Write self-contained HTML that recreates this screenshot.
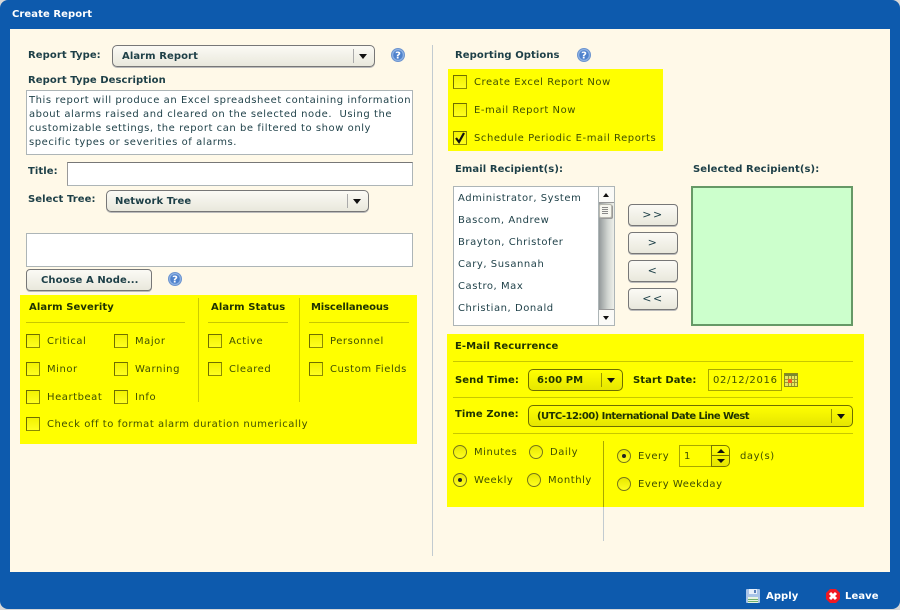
<!DOCTYPE html>
<html><head><meta charset="utf-8"><title>Create Report</title>
<style>
html,body{margin:0;padding:0;background:#e8e8e8}
#w{position:relative;width:900px;height:610px;overflow:hidden;background:#d8d8d8;font-family:"DejaVu Sans",sans-serif;font-size:10px;color:#1d3f47}
#f{position:absolute;left:0;top:0;width:900px;height:609px;background:#0d5aad;border-radius:8px}
#c{position:absolute;left:10px;top:29px;width:880px;height:543px;background:#fff9e8}
.a{position:absolute}
.t{position:absolute;height:14px;line-height:14px;margin-top:2px;white-space:nowrap;letter-spacing:.55px}
.b{font-weight:bold;letter-spacing:.08px}
.y{position:absolute;background:#ffff00}
.yt{color:#3f4f00}
.yb{color:#1f3300}
.sel{position:absolute;box-sizing:border-box;height:22px;border:1px solid #777;border-radius:5px;background:linear-gradient(#fbfaf5,#e9e8dc);box-shadow:0 1px 0 #bbb}
.sy{background:linear-gradient(#ffff00,#e6e600);border-color:#6e6e00;box-shadow:none}
.sp{position:absolute;top:3px;width:1px;height:14px;background:#aaa}
.sy .sp{background:#999900}
.ar{position:absolute;top:8px;width:0;height:0;border-left:4px solid transparent;border-right:4px solid transparent;border-top:5px solid #111}
.box{position:absolute;box-sizing:border-box;background:#fff;border:1px solid #adb5b7}
.cb{position:absolute;box-sizing:border-box;width:14px;height:14px;border:1px solid #6e6e00;border-right-color:#8c8c00;border-bottom-color:#8c8c00;background:linear-gradient(#f2f200,#ffff20)}
.ln{position:absolute;height:1px;background:#c8c800}
.vl{position:absolute;width:1px;background:#cccc00}
.btn{position:absolute;box-sizing:border-box;border:1px solid #777;border-radius:4px;background:linear-gradient(#fbfaf5,#e9e8dc);text-align:center;box-shadow:0 1px 0 #bbb}
.btn .g{left:0;width:48px;top:1px;font-size:11px;letter-spacing:1.5px}
.r{position:absolute;box-sizing:border-box;width:14px;height:14px;border:1px solid #77771a;border-radius:50%;background:linear-gradient(#e8e800,#ffff20)}
.r i{position:absolute;left:4px;top:4px;width:4px;height:4px;border-radius:50%;background:#222}
svg{position:absolute;overflow:visible}
</style></head><body>
<div id="w">
<div id="f"></div>
<div id="c"></div>
<div class="t b" style="left:12px;top:6px;color:#fff">Create Report</div>

<!-- Left column -->
<div class="t b" style="left:28px;top:47px">Report Type:</div>
<div class="sel" style="left:112px;top:45px;width:263px"><div class="t b" style="left:9px;top:2px">Alarm Report</div><div class="sp" style="left:240px"></div><div class="ar" style="left:246px"></div></div>
<svg style="left:391px;top:48px" width="14" height="14" viewBox="0 0 14 14"><circle cx="7" cy="7" r="6.5" fill="#8fb3e4" stroke="#6c94cf"/><circle cx="7" cy="7" r="4.8" fill="#4f82cc"/><text x="7" y="10.5" font-family="DejaVu Sans" font-size="10" font-weight="bold" fill="#fff" text-anchor="middle">?</text></svg>
<div class="t b" style="left:28px;top:72px">Report Type Description</div>
<div class="box" style="left:26px;top:90px;width:387px;height:65px"></div>
<div class="t" style="left:29px;top:92px">This report will produce an Excel spreadsheet containing information</div>
<div class="t" style="left:29px;top:106px">about alarms raised and cleared on the selected node.&nbsp; Using the</div>
<div class="t" style="left:29px;top:120px">customizable settings, the report can be filtered to show only</div>
<div class="t" style="left:29px;top:134px">specific types or severities of alarms.</div>
<div class="t b" style="left:28px;top:163px">Title:</div>
<div class="box" style="left:67px;top:162px;width:346px;height:24px;border-top-color:#777;border-left-color:#999"></div>
<div class="t b" style="left:28px;top:191px">Select Tree:</div>
<div class="sel" style="left:106px;top:190px;width:263px"><div class="t b" style="left:8px;top:2px">Network Tree</div><div class="sp" style="left:240px"></div><div class="ar" style="left:246px"></div></div>
<div class="box" style="left:26px;top:233px;width:387px;height:34px"></div>
<div class="btn" style="left:26px;top:269px;width:126px;height:22px"><div class="t b" style="left:14px;top:2px">Choose A Node...</div></div>
<svg style="left:168px;top:272px" width="14" height="14" viewBox="0 0 14 14"><circle cx="7" cy="7" r="6.5" fill="#8fb3e4" stroke="#6c94cf"/><circle cx="7" cy="7" r="4.8" fill="#4f82cc"/><text x="7" y="10.5" font-family="DejaVu Sans" font-size="10" font-weight="bold" fill="#fff" text-anchor="middle">?</text></svg>

<div class="y" style="left:20px;top:295px;width:397px;height:149px"></div>
<div class="vl" style="left:198px;top:298px;height:104px"></div>
<div class="vl" style="left:299px;top:298px;height:104px"></div>
<div class="t b yb" style="left:29px;top:299px">Alarm Severity</div>
<div class="t b yb" style="left:211px;top:299px">Alarm Status</div>
<div class="t b yb" style="left:311px;top:299px;letter-spacing:-.14px">Miscellaneous</div>
<div class="ln" style="left:26px;top:322px;width:159px"></div>
<div class="ln" style="left:208px;top:322px;width:80px"></div>
<div class="ln" style="left:309px;top:322px;width:100px"></div>

<div class="cb" style="left:26px;top:334px"></div><div class="t yt" style="left:47px;top:333px">Critical</div>
<div class="cb" style="left:114px;top:334px"></div><div class="t yt" style="left:135px;top:333px">Major</div>
<div class="cb" style="left:208px;top:334px"></div><div class="t yt" style="left:229px;top:333px">Active</div>
<div class="cb" style="left:309px;top:334px"></div><div class="t yt" style="left:330px;top:333px">Personnel</div>
<div class="cb" style="left:26px;top:362px"></div><div class="t yt" style="left:47px;top:361px">Minor</div>
<div class="cb" style="left:114px;top:362px"></div><div class="t yt" style="left:135px;top:361px">Warning</div>
<div class="cb" style="left:208px;top:362px"></div><div class="t yt" style="left:229px;top:361px">Cleared</div>
<div class="cb" style="left:309px;top:362px"></div><div class="t yt" style="left:330px;top:361px">Custom Fields</div>
<div class="cb" style="left:26px;top:390px"></div><div class="t yt" style="left:47px;top:389px">Heartbeat</div>
<div class="cb" style="left:114px;top:390px"></div><div class="t yt" style="left:135px;top:389px">Info</div>
<div class="cb" style="left:26px;top:417px"></div><div class="t yt" style="left:47px;top:416px">Check off to format alarm duration numerically</div>

<!-- Divider -->
<div class="a" style="left:432px;top:45px;width:1px;height:511px;background:#c2cbd0"></div>

<!-- Right column -->
<div class="t b" style="left:455px;top:47px">Reporting Options</div>
<svg style="left:577px;top:48px" width="14" height="14" viewBox="0 0 14 14"><circle cx="7" cy="7" r="6.5" fill="#8fb3e4" stroke="#6c94cf"/><circle cx="7" cy="7" r="4.8" fill="#4f82cc"/><text x="7" y="10.5" font-family="DejaVu Sans" font-size="10" font-weight="bold" fill="#fff" text-anchor="middle">?</text></svg>
<div class="y" style="left:448px;top:69px;width:215px;height:82px"></div>
<div class="cb" style="left:453px;top:75px"></div><div class="t yt" style="left:474px;top:74px">Create Excel Report Now</div>
<div class="cb" style="left:453px;top:103px"></div><div class="t yt" style="left:474px;top:102px">E-mail Report Now</div>
<div class="cb" style="left:453px;top:131px"></div><div class="t yt" style="left:474px;top:130px">Schedule Periodic E-mail Reports</div>
<svg style="left:453px;top:131px" width="14" height="14" viewBox="0 0 14 14"><path d="M3 7 L6 11 L11 2" fill="none" stroke="#111" stroke-width="2.2"/></svg>

<div class="t b" style="left:455px;top:161px">Email Recipient(s):</div>
<div class="t b" style="left:693px;top:161px">Selected Recipient(s):</div>
<div class="box" style="left:453px;top:186px;width:162px;height:140px"></div>
<div class="t" style="left:458px;top:190px">Administrator, System</div>
<div class="t" style="left:458px;top:212px">Bascom, Andrew</div>
<div class="t" style="left:458px;top:234px">Brayton, Christofer</div>
<div class="t" style="left:458px;top:256px">Cary, Susannah</div>
<div class="t" style="left:458px;top:278px">Castro, Max</div>
<div class="t" style="left:458px;top:300px">Christian, Donald</div>
<div class="a" style="left:598px;top:187px;width:16px;height:138px;background:linear-gradient(90deg,#93999a,#d2d6d2 60%,#eef0ea);border-left:1px solid #adb5b7;box-sizing:border-box"></div>
<div class="a" style="left:599px;top:187px;width:15px;height:16px;background:#fafaf7;border-bottom:1px solid #999;box-sizing:border-box"></div>
<div class="a" style="left:603px;top:193px;width:0;height:0;border-left:3.5px solid transparent;border-right:3.5px solid transparent;border-bottom:4px solid #111"></div>
<div class="a" style="left:599px;top:204px;width:13px;height:14px;background:#f6f6ef;border:1px solid #b8b8b0;border-radius:2px;box-sizing:border-box;box-shadow:1px 1px 0 #999"></div>
<div class="a" style="left:602px;top:207px;width:6px;height:8px;background:repeating-linear-gradient(#888 0 1px,transparent 1px 2px)"></div>
<div class="a" style="left:599px;top:309px;width:15px;height:16px;background:#fafaf7;border-top:1px solid #999;box-sizing:border-box"></div>
<div class="a" style="left:603px;top:316px;width:0;height:0;border-left:3.5px solid transparent;border-right:3.5px solid transparent;border-top:4px solid #111"></div>

<div class="btn" style="left:628px;top:204px;width:50px;height:22px"><div class="t g">&gt;&gt;</div></div>
<div class="btn" style="left:628px;top:232px;width:50px;height:22px"><div class="t g">&gt;</div></div>
<div class="btn" style="left:628px;top:260px;width:50px;height:22px"><div class="t g">&lt;</div></div>
<div class="btn" style="left:628px;top:288px;width:50px;height:22px"><div class="t g">&lt;&lt;</div></div>
<div class="a" style="left:691px;top:186px;width:162px;height:140px;box-sizing:border-box;background:#ccffcc;border:2px solid #669966"></div>

<!-- Recurrence -->
<div class="y" style="left:447px;top:334px;width:417px;height:173px"></div>
<div class="t b yb" style="left:455px;top:338px">E-Mail Recurrence</div>
<div class="ln" style="left:453px;top:361px;width:400px"></div>
<div class="t b yb" style="left:455px;top:372px">Send Time:</div>
<div class="sel sy" style="left:528px;top:369px;width:95px"><div class="t b yb" style="left:8px;top:2px">6:00 PM</div><div class="sp" style="left:72px"></div><div class="ar" style="left:78px"></div></div>
<div class="t b yb" style="left:633px;top:372px">Start Date:</div>
<div class="a" style="left:708px;top:369px;width:74px;height:22px;box-sizing:border-box;border:1px solid #a8a800"></div>
<div class="t yt" style="left:713px;top:372px;letter-spacing:.7px">02/12/2016</div>
<svg style="left:784px;top:373px" width="14" height="14" viewBox="0 0 14 14"><rect x=".5" y=".5" width="13" height="13" fill="#e8e860" stroke="#8a8a20"/><rect x="1" y="1" width="12" height="2" fill="#7a8a30"/><path d="M1 6.5H13M1 9.5H13M4.5 3V13M7.5 3V13M10.5 3V13" stroke="#9a9a30" stroke-width="1"/><rect x="4" y="6" width="4" height="4" fill="#f06020"/></svg>
<div class="ln" style="left:453px;top:397px;width:400px"></div>
<div class="t b yb" style="left:455px;top:406px">Time Zone:</div>
<div class="sel sy" style="left:528px;top:405px;width:325px"><div class="t b yb" style="left:8px;top:2px;letter-spacing:-.54px">(UTC-12:00) International Date Line West</div><div class="sp" style="left:302px"></div><div class="ar" style="left:308px"></div></div>
<div class="ln" style="left:453px;top:433px;width:400px"></div>
<div class="a" style="left:603px;top:441px;width:1px;height:66px;background:#a8a800"></div>
<div class="a" style="left:603px;top:507px;width:1px;height:34px;background:#c2cbd0"></div>

<div class="r" style="left:453px;top:445px"></div><div class="t yt" style="left:474px;top:444px">Minutes</div>
<div class="r" style="left:529px;top:445px"></div><div class="t yt" style="left:550px;top:444px">Daily</div>
<div class="r" style="left:453px;top:473px"><i></i></div><div class="t yt" style="left:474px;top:472px">Weekly</div>
<div class="r" style="left:527px;top:473px"></div><div class="t yt" style="left:548px;top:472px">Monthly</div>
<div class="r" style="left:617px;top:449px"><i></i></div><div class="t yt" style="left:638px;top:448px">Every</div>
<div class="r" style="left:617px;top:477px"></div><div class="t yt" style="left:638px;top:476px">Every Weekday</div>
<div class="a" style="left:679px;top:445px;width:33px;height:22px;box-sizing:border-box;border:1px solid #a8a800"></div>
<div class="t yt" style="left:684px;top:448px">1</div>
<div class="a" style="left:711px;top:445px;width:19px;height:22px;box-sizing:border-box;border:1px solid #777700;border-radius:0 5px 5px 0;background:linear-gradient(#ffff00,#e6e600)"></div>
<div class="a" style="left:712px;top:455px;width:17px;height:1px;background:#777700"></div>
<div class="a" style="left:717px;top:449px;width:0;height:0;border-left:4px solid transparent;border-right:4px solid transparent;border-bottom:4px solid #111"></div>
<div class="a" style="left:717px;top:459px;width:0;height:0;border-left:4px solid transparent;border-right:4px solid transparent;border-top:4px solid #111"></div>
<div class="t yt" style="left:740px;top:448px">day(s)</div>

<!-- Footer -->
<svg style="left:746px;top:589px" width="14" height="14" viewBox="0 0 14 14"><rect width="14" height="14" rx="1" fill="#a8c4e8"/><rect x="3" y="0" width="8" height="5" fill="#e8f0fa"/><rect x="8" y="1" width="2" height="3" fill="#5a80b8"/><rect x="2" y="8" width="10" height="6" fill="#e8f5e0"/><rect x="2" y="10" width="10" height="1" fill="#70b070"/><rect x="2" y="12" width="10" height="1" fill="#70b070"/></svg>
<div class="t b" style="left:766px;top:588px;color:#fff">Apply</div>
<svg style="left:826px;top:589px" width="14" height="14" viewBox="0 0 14 14"><path d="M4 0H10L14 4V10L10 14H4L0 10V4Z" fill="#f01822"/><path d="M4 4L10 10M10 4L4 10" stroke="#fff" stroke-width="3"/></svg>
<div class="t b" style="left:845px;top:588px;color:#fff">Leave</div>
</div>
</body></html>
